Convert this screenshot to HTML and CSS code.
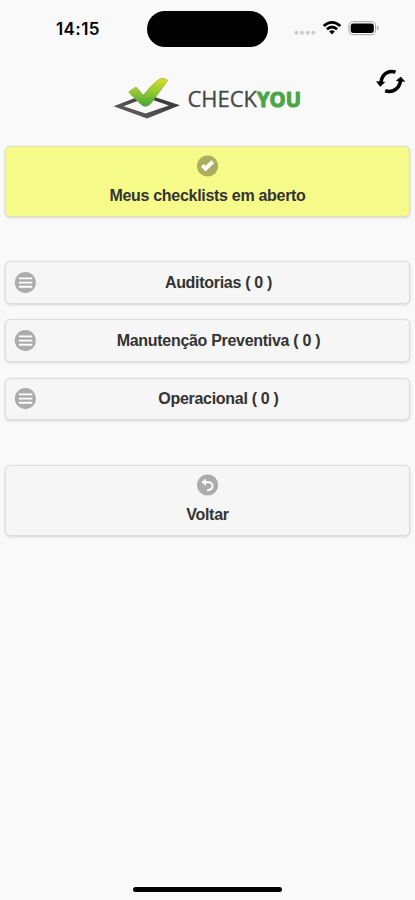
FILE: index.html
```html
<!DOCTYPE html>
<html lang="pt-BR">
<head>
<meta charset="utf-8">
<meta name="viewport" content="width=device-width">
<title>CheckYou</title>
<link rel="stylesheet" href="styles.css">
</head>
<body>
<div class="status">
  <div class="time">14:15</div>
  <div class="island"></div>
  <svg class="indicators" width="90" height="20" viewBox="0 0 90 20">
    <g fill="#cbcbcb"><circle cx="4.4" cy="14.8" r="2"/><circle cx="10" cy="14.8" r="2"/><circle cx="15.7" cy="14.8" r="2"/><circle cx="21.3" cy="14.8" r="2"/></g>
    <g fill="none" stroke="#000" stroke-width="2.8"><path d="M31.7 8Q40 .7 48.3 8"/><path d="M34.8 11.3Q40 6.8 45.2 11.3"/></g>
    <path d="M37.2 13.5Q40 11.2 42.8 13.5L40 16.5Z"/>
    <rect x="56.9" y="3.7" width="26.7" height="13" rx="4.2" fill="none" stroke="#a0a0a0"/>
    <rect x="58.7" y="5.4" width="23.1" height="9.6" rx="2.7"/>
    <path d="M85.2 8.1Q86.7 8.6 86.7 10.2Q86.7 11.8 85.2 12.3Z" fill="#a0a0a0"/>
  </svg>
</div>
<header class="header">
  <svg class="logo" width="200" height="50" viewBox="105 73 200 50">
    <defs>
      <linearGradient id="leaf" x1="0" y1="0" x2="0" y2="1"><stop offset="0" stop-color="#d8e021"/><stop offset=".5" stop-color="#8fc832"/><stop offset="1" stop-color="#42a536"/></linearGradient>
      <linearGradient id="slate" x1="0" y1="1" x2="1" y2="0"><stop offset="0" stop-color="#686868"/><stop offset="1" stop-color="#2c2c2c"/></linearGradient>
    </defs>
    <path fill="url(#slate)" fill-rule="evenodd" d="M113.5 106.3L145.5 94L180 105.3L147 118.5ZM123.5 106.2L145.5 113.6L169 105.5L146 97.7Z"/>
    <path fill="url(#leaf)" stroke="#8a9140" stroke-width=".5" d="M129.3 91.2L135.2 87.4Q137 87.2 137.8 88.5L143.2 95.3Q151 85.5 158.5 79.6Q160.5 78 163 78.5L166.3 79.2Q168.3 79.8 166.8 81.8L151.2 103.3Q145.5 109.3 140.2 103.8L129.5 93.2Q128.5 92 129.3 91.2Z"/>
    <text class="word" x="187.5" y="107.3" textLength="69.5" lengthAdjust="spacingAndGlyphs">CHECK</text>
    <text class="word word-bold" x="257" y="107.3" textLength="44" lengthAdjust="spacingAndGlyphs">YOU</text>
  </svg>
  <svg class="refresh" width="30" height="28" viewBox="0 0 30 28">
    <g fill="none" stroke="#000" stroke-width="3.6"><path d="M19.5 4.1C12 1.7 5.7 6.5 5 14.5"/><path d="M9.2 22.8C17 25.3 23.5 20.5 24.5 12.5"/></g>
    <path d="M.6 13.6L8.7 14.2L4.2 18.4ZM20.3 12.7L28.7 13.4L24.8 9Z" stroke="#000" stroke-width=".6" stroke-linejoin="round"/>
  </svg>
</header>
<main class="menu">
  <button class="btn btn-tall btn-open">
    <svg class="icon" width="22" height="22" viewBox="0 0 22 22"><circle cx="10.6" cy="11" r="10.6" fill="#000" fill-opacity=".3"/><path transform="translate(3.9 4.2) scale(.95)" fill="#fff" d="M14 4L11 1L5 7L3 5L0 8L5 13Z"/></svg>
    <span class="label">Meus checklists em aberto</span>
  </button>
  <div class="group">
    <button class="btn btn-row"><svg class="icon" width="22" height="22" viewBox="0 0 22 22"><circle cx="11.4" cy="10.6" r="10.6" fill="#000" fill-opacity=".3"/><path d="M4.9 6.4H18.3M4.9 10.6H18.3M4.9 14.8H18.3" stroke="#fff" stroke-width="1.9"/></svg><span class="label">Auditorias ( 0 )</span></button>
    <button class="btn btn-row"><svg class="icon" width="22" height="22" viewBox="0 0 22 22"><circle cx="11.4" cy="10.6" r="10.6" fill="#000" fill-opacity=".3"/><path d="M4.9 6.4H18.3M4.9 10.6H18.3M4.9 14.8H18.3" stroke="#fff" stroke-width="1.9"/></svg><span class="label">Manutenção Preventiva ( 0 )</span></button>
    <button class="btn btn-row"><svg class="icon" width="22" height="22" viewBox="0 0 22 22"><circle cx="11.4" cy="10.6" r="10.6" fill="#000" fill-opacity=".3"/><path d="M4.9 6.4H18.3M4.9 10.6H18.3M4.9 14.8H18.3" stroke="#fff" stroke-width="1.9"/></svg><span class="label">Operacional ( 0 )</span></button>
  </div>
  <button class="btn btn-tall">
    <svg class="icon" width="22" height="22" viewBox="0 0 22 22"><circle cx="10.6" cy="11" r="10.6" fill="#000" fill-opacity=".3"/><path d="M8.1 8.2H11.4C16.6 8.2 17.6 15.6 10 16.4" fill="none" stroke="#fff" stroke-width="2"/><path d="M8.9 4.6V11.8L4.3 8.2Z" fill="#fff"/></svg>
    <span class="label">Voltar</span>
  </button>
</main>
<div class="home"></div>
</body>
</html>
```
FILE: styles.css
```css
* { box-sizing: border-box; }
body {
  margin: 0;
  height: 900px;
  display: flex;
  flex-direction: column;
  background: #f9f9f9;
  font-family: "Liberation Sans", Arial, sans-serif;
  overflow: hidden;
}
.status {
  height: 58px;
  flex: none;
  display: grid;
  grid-template-columns: 147px 121px 1fr;
}
.time {
  padding: 18px 0 0 56px;
  font: 600 17px/22px Inter, sans-serif;
  letter-spacing: .4px;
  color: #000;
}
.island {
  height: 36px;
  margin-top: 11px;
  border-radius: 18px;
  background: #000;
}
.indicators { margin: 18px 0 0 24px; }
.header {
  height: 88px;
  flex: none;
  display: flex;
}
.logo { margin: 15px 0 0 105px; }
.word {
  font: 400 21.5px "Open Sans", sans-serif;
  fill: #484848;
  stroke: #484848;
  stroke-width: .3px;
}
.word-bold {
  font-weight: 700;
  fill: #4aa546;
  stroke: #4aa546;
  stroke-width: 1.2px;
  stroke-linejoin: round;
}
.refresh { margin: 10px 0 0 71px; }
.menu {
  padding: 0 5px;
  display: flex;
  flex-direction: column;
  gap: 44.4px;
}
.group {
  display: flex;
  flex-direction: column;
  gap: 15.5px;
}
.btn {
  width: 100%;
  padding: 0;
  display: flex;
  align-items: center;
  justify-content: center;
  border: 1px solid #ddd;
  border-radius: 5px;
  background: #f6f6f6;
  box-shadow: 0 1px 3px rgba(0, 0, 0, .15);
  color: #333;
  font: 700 16px/20px "Liberation Sans", Arial, sans-serif;
  letter-spacing: -.3px;
  text-shadow: 0 1px 0 #f3f3f3;
}
.icon { flex: none; }
.btn-tall {
  height: 71px;
  flex-direction: column;
  justify-content: flex-start;
  padding-top: 8px;
  gap: 9px;
}
.btn-open {
  background: #f6fa88;
  border-color: #dfe0b9;
  text-shadow: none;
}
.btn-row {
  height: 42.6px;
  justify-content: flex-start;
  padding: 0 16px 0 8px;
}
.btn-row .label {
  flex: 1;
  padding-left: 8px;
  text-align: center;
}
.home {
  width: 149px;
  height: 5px;
  margin: auto auto 8px 133px;
  border-radius: 3px;
  background: #000;
}
```
